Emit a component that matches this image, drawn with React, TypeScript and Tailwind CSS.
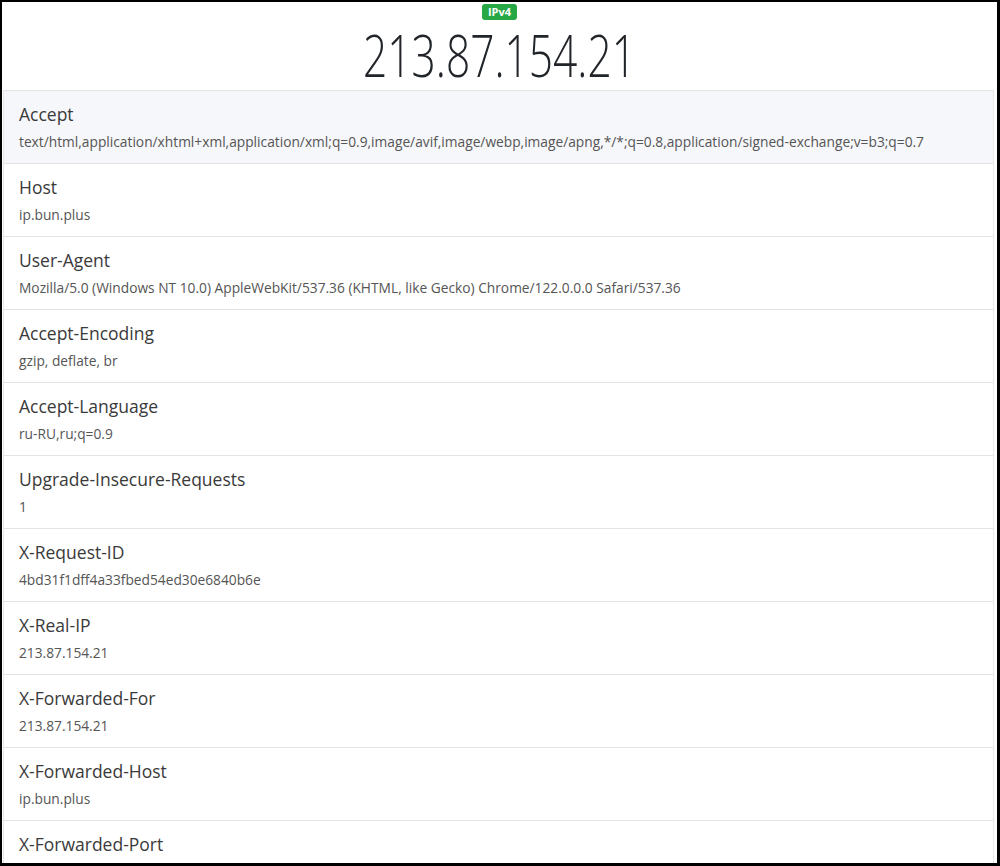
const headers: [string, string][] = [
  [
    "Accept",
    "text/html,application/xhtml+xml,application/xml;q=0.9,image/avif,image/webp,image/apng,*/*;q=0.8,application/signed-exchange;v=b3;q=0.7",
  ],
  ["Host", "ip.bun.plus"],
  [
    "User-Agent",
    "Mozilla/5.0 (Windows NT 10.0) AppleWebKit/537.36 (KHTML, like Gecko) Chrome/122.0.0.0 Safari/537.36",
  ],
  ["Accept-Encoding", "gzip, deflate, br"],
  ["Accept-Language", "ru-RU,ru;q=0.9"],
  ["Upgrade-Insecure-Requests", "1"],
  ["X-Request-ID", "4bd31f1dff4a33fbed54ed30e6840b6e"],
  ["X-Real-IP", "213.87.154.21"],
  ["X-Forwarded-For", "213.87.154.21"],
  ["X-Forwarded-Host", "ip.bun.plus"],
  ["X-Forwarded-Port", "443"],
]

export default function App() {
  return (
    <div className="h-[866px] w-[1000px] overflow-hidden border-t-2 border-l-2 border-r-[3px] border-b-[3px] border-black bg-white font-['Open_Sans',sans-serif]">
      {/* header with address */}
      <div className="flex h-[88px] flex-col items-center pt-[2px]">
        <span className="rounded-[3px] bg-[#28a745] px-[6px] text-[11px] leading-[16px] font-bold text-white">
          IPv4
        </span>
        <h1 className="mt-[4px] scale-x-[0.72] text-[59px] leading-[60px] font-light whitespace-nowrap text-[#212529]">
          213.87.154.21
        </h1>
      </div>

      <ul className="mr-[3px] ml-[1px] border-r border-l border-[#e8e8e8]">
        {headers.map(([name, value], i) => (
          <li
            key={name}
            className={`border-t border-[#e3e3e3] px-[15px] pt-[10px] pb-[10px] ${i === 0 ? "bg-[#f6f7fa]" : "bg-white"}`}
          >
            <div className="text-[17.5px] leading-[26px] font-medium text-[#3a3a3a]">{name}</div>
            <div className="mt-[4px] text-[13.75px] leading-[22px] whitespace-nowrap text-[#555]">{value}</div>
          </li>
        ))}
      </ul>
    </div>
  )
}
